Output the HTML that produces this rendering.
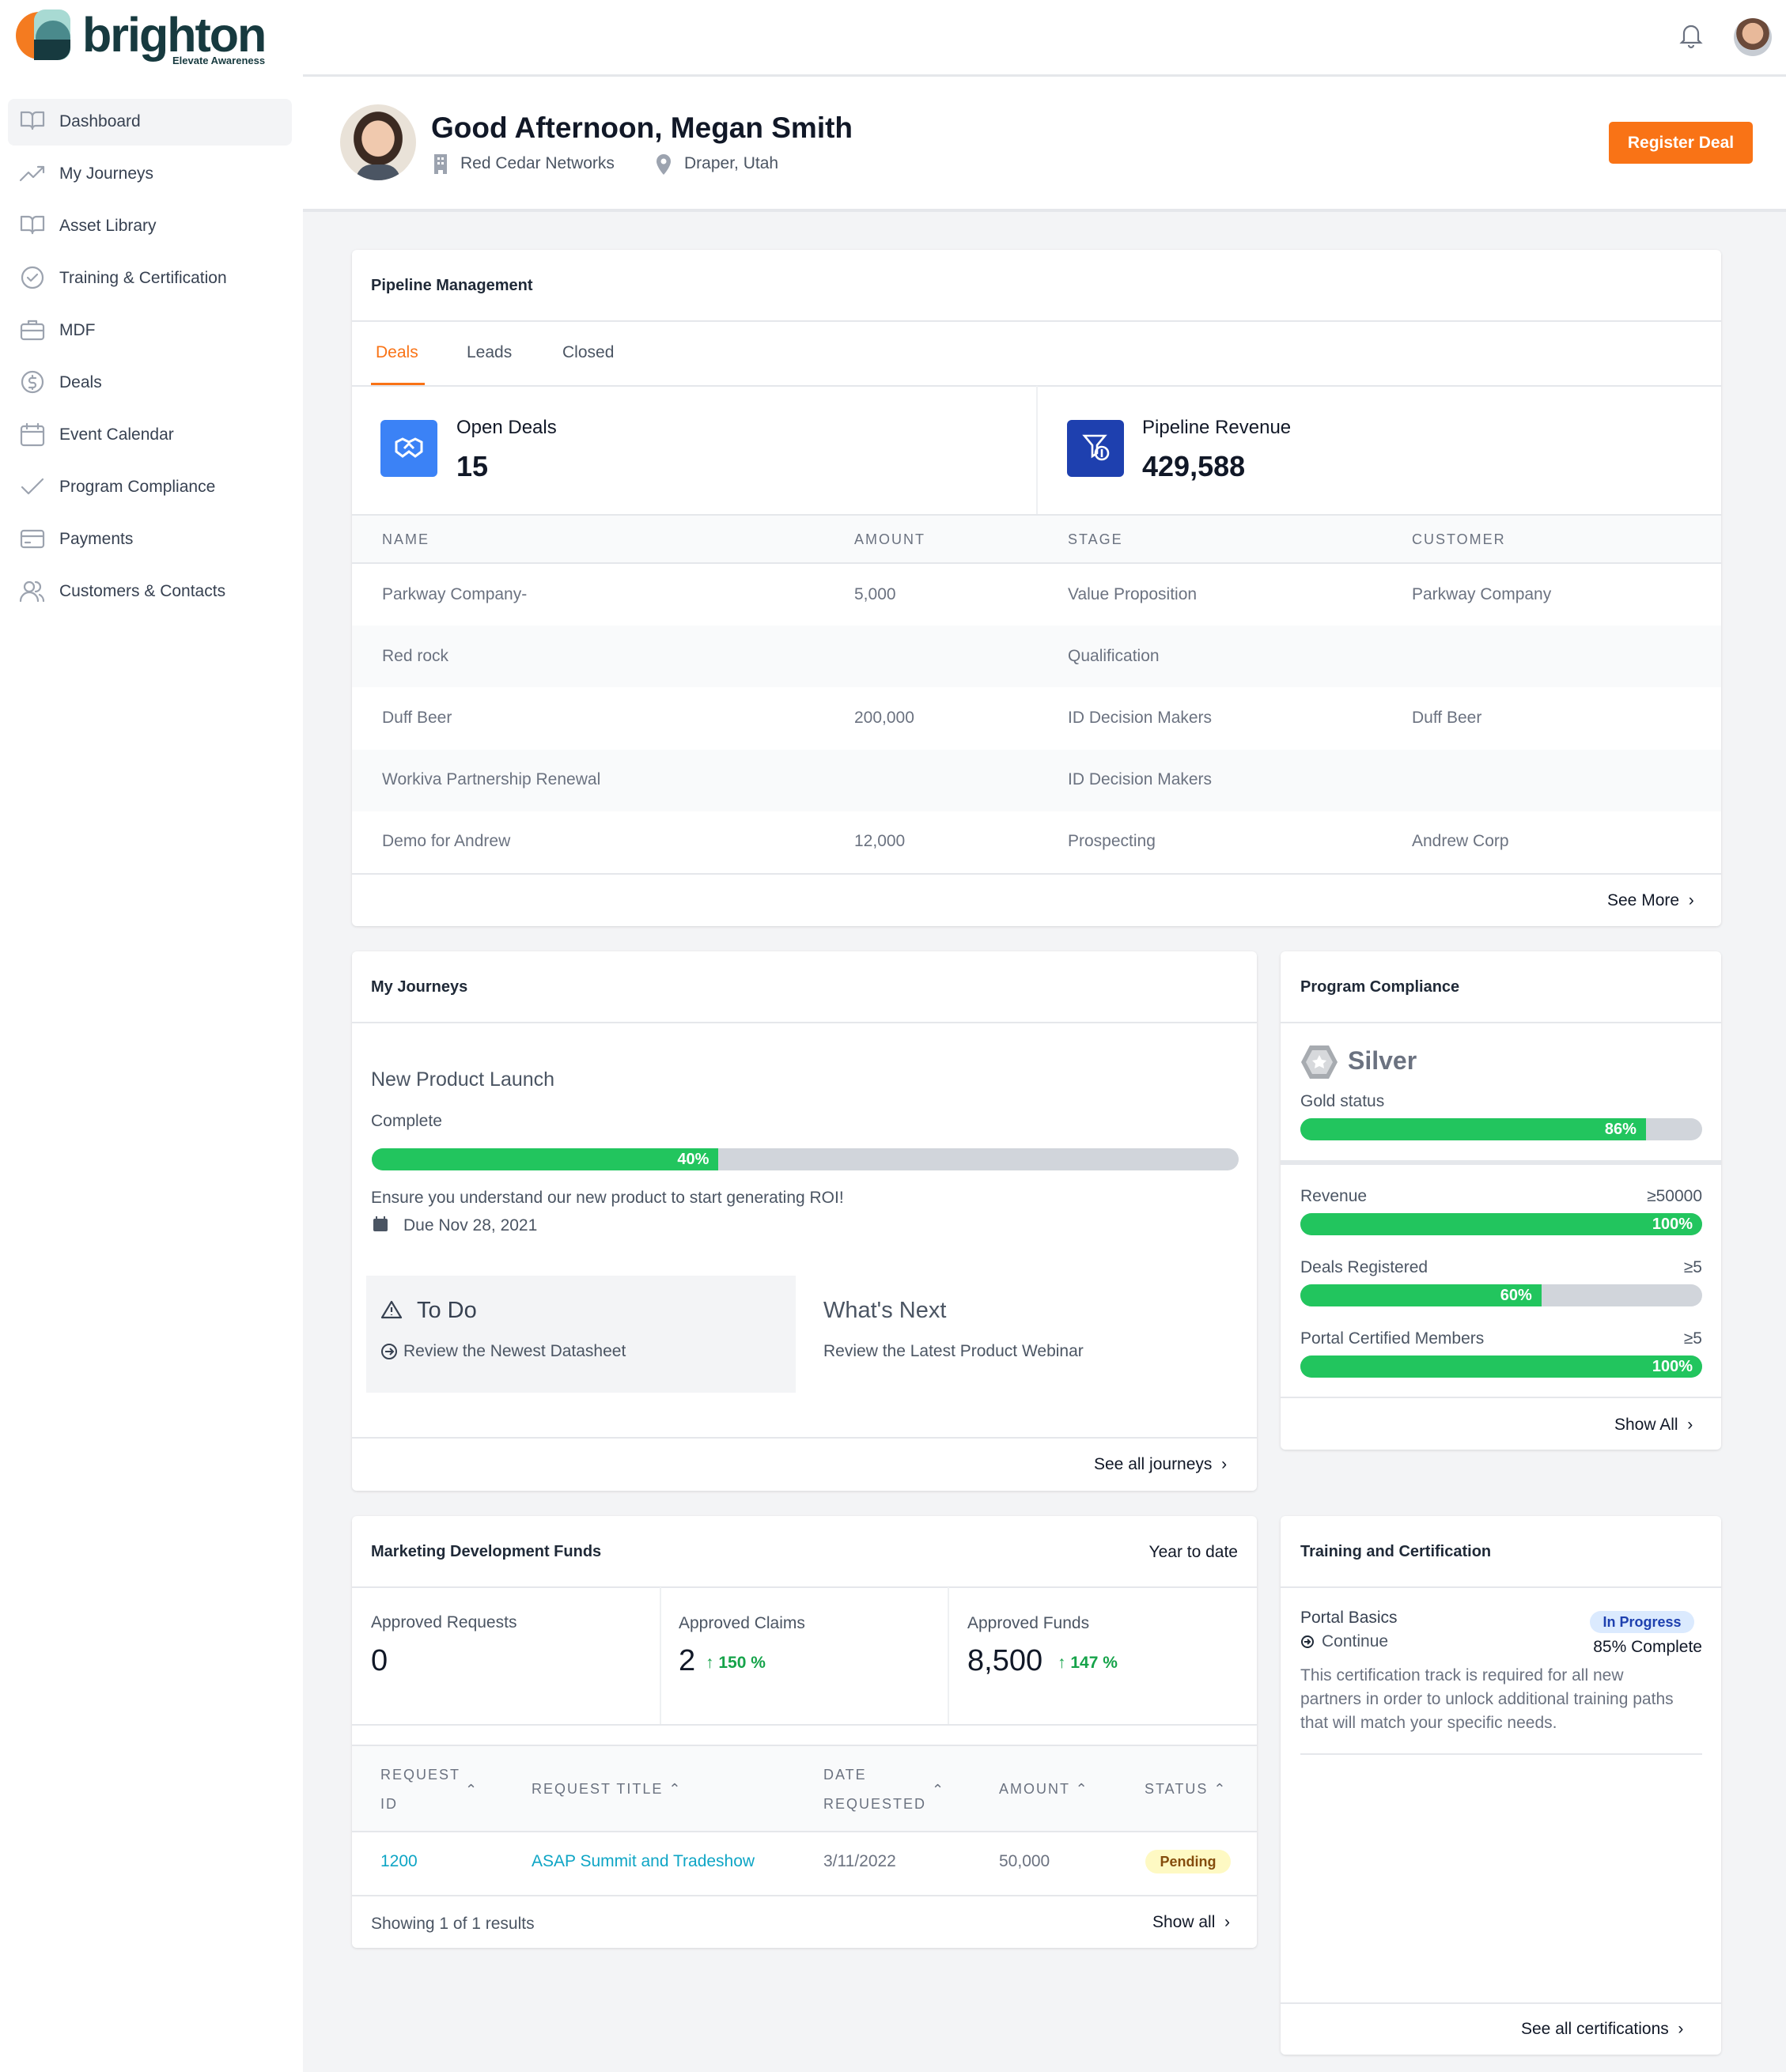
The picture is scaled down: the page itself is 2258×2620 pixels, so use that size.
<!DOCTYPE html>
<html><head><meta charset="utf-8"><style>
*{box-sizing:border-box;margin:0;padding:0}
body{width:2258px;height:2620px;position:relative;overflow:hidden;background:#f3f4f6;font-family:"Liberation Sans",sans-serif;color:#374151}
.a{position:absolute}
.t{position:absolute;white-space:nowrap;line-height:1}
.card{position:absolute;background:#fff;border-radius:6px;box-shadow:0 1px 3px rgba(0,0,0,.12)}
.hl{position:absolute;left:0;right:0;height:2px;background:#e5e7eb}
.bar{position:absolute;height:28px;border-radius:14px;background:#d1d5db;overflow:hidden}
.bar i{position:absolute;left:0;top:0;bottom:0;background:#22c55e;color:#fff;font-style:normal;font-weight:bold;font-size:20px;text-align:right;padding-right:12px;line-height:28px}
.th{font-size:18px;letter-spacing:2px;color:#6b7280}
.td{font-size:21px;color:#6b7280}
</style></head><body>
<div class="a" style="left:0;top:0;width:383px;height:2620px;background:#fff"></div>
<div class="a" style="left:383px;top:0;width:1875px;height:266px;background:#fff"></div>
<div class="a" style="left:383px;top:94px;width:1875px;height:3px;background:#e5e7eb"></div>
<div class="a" style="left:383px;top:264px;width:1875px;height:4px;background:#e5e7eb"></div>
<svg class="a" style="left:20px;top:10px" width="72" height="68" viewBox="0 0 72 68"><path d="M30 5 A30 30 0 0 0 30 65Z" fill="#f47b20"/><rect x="23" y="2" width="46" height="64" rx="14" fill="#a8dad3"/><circle cx="47" cy="38" r="22" fill="#4a8a8c"/><path d="M23 40h46v10a16 16 0 0 1-16 16H23z" fill="#173a3f"/></svg>
<div class="t" style="left:104px;top:14px;font-size:61px;font-weight:bold;color:#173a3f;letter-spacing:-2px">brighton</div>
<div class="t" style="left:218px;top:70px;font-size:13px;color:#173a3f;font-weight:bold">Elevate Awareness</div>
<div class="a" style="left:10px;top:125px;width:359px;height:59px;background:#f3f4f6;border-radius:8px"></div>
<div class="t" style="left:75px;top:143px;font-size:21px;color:#374151">Dashboard</div>
<div class="t" style="left:75px;top:209px;font-size:21px">My Journeys</div>
<div class="t" style="left:75px;top:275px;font-size:21px">Asset Library</div>
<div class="t" style="left:75px;top:341px;font-size:21px">Training &amp; Certification</div>
<div class="t" style="left:75px;top:407px;font-size:21px">MDF</div>
<div class="t" style="left:75px;top:473px;font-size:21px">Deals</div>
<div class="t" style="left:75px;top:539px;font-size:21px">Event Calendar</div>
<div class="t" style="left:75px;top:605px;font-size:21px">Program Compliance</div>
<div class="t" style="left:75px;top:671px;font-size:21px">Payments</div>
<div class="t" style="left:75px;top:737px;font-size:21px">Customers &amp; Contacts</div>
<svg class="a" style="left:24px;top:138px" width="34" height="640" fill="none" stroke="#9ca3af" stroke-width="2.2" stroke-linecap="round" stroke-linejoin="round">
<path d="M3 4h9a5 5 0 0 1 5 5v16a4 4 0 0 0-4-4H3zM31 4h-9a5 5 0 0 0-5 5v16a4 4 0 0 1 4-4h10z"/>
<g transform="translate(0,66)"><path d="M2 24l10-10 6 6 13-13M24 7h7v7"/></g>
<g transform="translate(0,132)"><path d="M3 4h9a5 5 0 0 1 5 5v16a4 4 0 0 0-4-4H3zM31 4h-9a5 5 0 0 0-5 5v16a4 4 0 0 1 4-4h10z"/></g>
<g transform="translate(0,198)"><circle cx="17" cy="15" r="13"/><path d="M11 15l4 4 8-8"/></g>
<g transform="translate(0,264)"><rect x="3" y="8" width="28" height="19" rx="3"/><path d="M12 8V4h10v4M3 16h28"/></g>
<g transform="translate(0,330)"><circle cx="17" cy="15" r="13"/><path d="M21 10h-5a3 3 0 0 0 0 6h2a3 3 0 0 1 0 6h-5M17 7v3M17 22v2"/></g>
<g transform="translate(0,396)"><rect x="3" y="5" width="28" height="24" rx="3"/><path d="M3 12h28M10 2v6M24 2v6"/></g>
<g transform="translate(0,462)"><path d="M4 16l8 8L30 6"/></g>
<g transform="translate(0,528)"><rect x="3" y="5" width="28" height="21" rx="3"/><path d="M3 12h28M8 20h6"/></g>
<g transform="translate(0,594)"><circle cx="13" cy="10" r="6"/><path d="M2 28a11 11 0 0 1 22 0M21 4a6 6 0 0 1 0 12M26 20a9 9 0 0 1 5 8"/></g>
</svg>
<svg class="a" style="left:2123px;top:28px" width="30" height="34" fill="none" stroke="#6b7280" stroke-width="2.2"><path d="M6 23V14a9 9 0 0 1 18 0v9l3 3H3zM12 29a3 3 0 0 0 6 0"/></svg>
<div class="a" style="left:2192px;top:23px;width:48px;height:48px;border-radius:50%;background:radial-gradient(circle at 50% 40%,#e8b99a 0 35%,#6b4a3a 36% 55%,#c7ccd3 56%)"></div>
<div class="a" style="left:430px;top:132px;width:96px;height:96px;border-radius:50%;background:radial-gradient(ellipse at 50% 45%,#f0c9ae 0 30%,#3b2a22 31% 45%,#e9e2d8 46%);overflow:hidden"><div class="a" style="left:20px;top:76px;width:56px;height:30px;background:#4b5563;border-radius:20px 20px 0 0"></div></div>
<div class="t" style="left:545px;top:143px;font-size:37px;font-weight:bold;color:#111827">Good Afternoon, Megan Smith</div>
<svg class="a" style="left:548px;top:194px" width="18" height="26" fill="#9ca3af"><path d="M1 1h16v25h-5v-5H6v5H1z"/><rect x="5" y="5" width="3" height="3" fill="#fff"/><rect x="10" y="5" width="3" height="3" fill="#fff"/><rect x="5" y="11" width="3" height="3" fill="#fff"/><rect x="10" y="11" width="3" height="3" fill="#fff"/></svg>
<div class="t" style="left:582px;top:196px;font-size:21px;color:#4b5563">Red Cedar Networks</div>
<svg class="a" style="left:828px;top:194px" width="22" height="28"><path d="M11 1a9 9 0 0 1 9 9c0 7-9 17-9 17S2 17 2 10a9 9 0 0 1 9-9z" fill="#9ca3af"/><circle cx="11" cy="10" r="3.5" fill="#fff"/></svg>
<div class="t" style="left:865px;top:196px;font-size:21px;color:#4b5563">Draper, Utah</div>
<div class="a" style="left:2034px;top:154px;width:182px;height:53px;background:#f97316;border-radius:5px;color:#fff;font-size:21px;font-weight:bold;text-align:center;line-height:53px">Register Deal</div>

<div class="card" style="left:445px;top:316px;width:1731px;height:855px">
<div class="t" style="left:24px;top:35px;font-size:20px;font-weight:bold;color:#1f2937">Pipeline Management</div>
<div class="hl" style="top:89px"></div>
<div class="t" style="left:30px;top:119px;font-size:21px;color:#f97316">Deals</div>
<div class="a" style="left:24px;top:168px;width:68px;height:4px;background:#f97316"></div>
<div class="t" style="left:145px;top:119px;font-size:21px;color:#4b5563">Leads</div>
<div class="t" style="left:266px;top:119px;font-size:21px;color:#4b5563">Closed</div>
<div class="hl" style="top:171px"></div>
<div class="a" style="left:865px;top:172px;width:2px;height:162px;background:#eef0f2"></div>
<div class="a" style="left:36px;top:215px;width:72px;height:72px;border-radius:6px;background:#3b82f6"></div>
<svg class="a" style="left:52px;top:233px" width="40" height="36" fill="none" stroke="#fff" stroke-width="3"><path d="M4 10l8-4 8 4 8-4 8 4v12l-8 6-8-6-8 6-8-6z"/><path d="M14 18l6-6 6 6"/></svg>
<div class="t" style="left:132px;top:213px;font-size:24px;color:#111827">Open Deals</div>
<div class="t" style="left:132px;top:256px;font-size:36px;font-weight:bold;color:#111827">15</div>
<div class="a" style="left:904px;top:215px;width:72px;height:72px;border-radius:6px;background:#1e40af"></div>
<svg class="a" style="left:922px;top:231px" width="40" height="40" fill="none" stroke="#fff" stroke-width="2.6"><path d="M4 4h26l-10 12v10l-6 4V16z"/><circle cx="26" cy="26" r="8"/><path d="M26 21v10"/></svg>
<div class="t" style="left:999px;top:213px;font-size:24px;color:#111827">Pipeline Revenue</div>
<div class="t" style="left:999px;top:256px;font-size:36px;font-weight:bold;color:#111827">429,588</div>
<div class="a" style="left:0;top:334px;width:1731px;height:63px;background:#f9fafb;border-top:2px solid #e5e7eb;border-bottom:2px solid #e5e7eb"></div>
<div class="t th" style="left:38px;top:357px">NAME</div>
<div class="t th" style="left:635px;top:357px">AMOUNT</div>
<div class="t th" style="left:905px;top:357px">STAGE</div>
<div class="t th" style="left:1340px;top:357px">CUSTOMER</div>
<div class="a" style="left:0;top:475px;width:1731px;height:78px;background:#f9fafb"></div>
<div class="a" style="left:0;top:632px;width:1731px;height:78px;background:#f9fafb"></div>
<div class="t td" style="left:38px;top:425px">Parkway Company-</div><div class="t td" style="left:635px;top:425px">5,000</div><div class="t td" style="left:905px;top:425px">Value Proposition</div><div class="t td" style="left:1340px;top:425px">Parkway Company</div>
<div class="t td" style="left:38px;top:503px">Red rock</div><div class="t td" style="left:905px;top:503px">Qualification</div>
<div class="t td" style="left:38px;top:581px">Duff Beer</div><div class="t td" style="left:635px;top:581px">200,000</div><div class="t td" style="left:905px;top:581px">ID Decision Makers</div><div class="t td" style="left:1340px;top:581px">Duff Beer</div>
<div class="t td" style="left:38px;top:659px">Workiva Partnership Renewal</div><div class="t td" style="left:905px;top:659px">ID Decision Makers</div>
<div class="t td" style="left:38px;top:737px">Demo for Andrew</div><div class="t td" style="left:635px;top:737px">12,000</div><div class="t td" style="left:905px;top:737px">Prospecting</div><div class="t td" style="left:1340px;top:737px">Andrew Corp</div>
<div class="hl" style="top:788px"></div>
<div class="t" style="left:1587px;top:812px;font-size:21px;color:#111827">See More &nbsp;›</div>
</div>

<div class="card" style="left:445px;top:1203px;width:1144px;height:682px">
<div class="t" style="left:24px;top:35px;font-size:20px;font-weight:bold;color:#1f2937">My Journeys</div>
<div class="hl" style="top:89px"></div>
<div class="t" style="left:24px;top:150px;font-size:25px;color:#4b5563">New Product Launch</div>
<div class="t" style="left:24px;top:204px;font-size:21px;color:#4b5563">Complete</div>
<div class="bar" style="left:25px;top:249px;width:1096px"><i style="width:40%">40%</i></div>
<div class="t" style="left:24px;top:301px;font-size:21px;color:#4b5563">Ensure you understand our new product to start generating ROI!</div>
<svg class="a" style="left:26px;top:335px" width="20" height="20" fill="#4b5563"><rect x="1" y="3" width="18" height="16" rx="2"/><rect x="4" y="0" width="2" height="5"/><rect x="14" y="0" width="2" height="5"/></svg>
<div class="t" style="left:65px;top:336px;font-size:21px;color:#4b5563">Due Nov 28, 2021</div>
<div class="a" style="left:18px;top:410px;width:543px;height:148px;background:#f3f4f6"></div>
<svg class="a" style="left:36px;top:440px" width="28" height="26" fill="none" stroke="#374151" stroke-width="2.2" stroke-linejoin="round"><path d="M14 3L26 23H2z"/><path d="M14 10v6M14 19v1"/></svg>
<div class="t" style="left:82px;top:440px;font-size:29px;color:#374151">To Do</div>
<svg class="a" style="left:36px;top:495px" width="22" height="22" fill="none" stroke="#374151" stroke-width="2"><circle cx="11" cy="11" r="9"/><path d="M6 11h9M12 7l4 4-4 4"/></svg>
<div class="t" style="left:65px;top:495px;font-size:21px;color:#4b5563">Review the Newest Datasheet</div>
<div class="t" style="left:596px;top:440px;font-size:29px;color:#4b5563">What's Next</div>
<div class="t" style="left:596px;top:495px;font-size:21px;color:#4b5563">Review the Latest Product Webinar</div>
<div class="hl" style="top:614px"></div>
<div class="t" style="left:938px;top:638px;font-size:21px;color:#111827">See all journeys &nbsp;›</div>
</div>

<div class="card" style="left:1619px;top:1203px;width:557px;height:630px">
<div class="t" style="left:25px;top:35px;font-size:20px;font-weight:bold;color:#1f2937">Program Compliance</div>
<div class="hl" style="top:89px"></div>
<svg class="a" style="left:25px;top:117px" width="48" height="46"><path d="M12 2h24l11 21-11 21H12L1 23z" fill="#a7abb0"/><path d="M15 8h18l8 15-8 15H15L7 23z" fill="#d7d9dc"/><path d="M24 14l3 6 6 1-4 4 1 6-6-3-6 3 1-6-4-4 6-1z" fill="#fff"/></svg>
<div class="t" style="left:85px;top:122px;font-size:32px;font-weight:bold;color:#6b7280">Silver</div>
<div class="t" style="left:25px;top:179px;font-size:21px;color:#4b5563">Gold status</div>
<div class="bar" style="left:25px;top:211px;width:508px"><i style="width:86%">86%</i></div>
<div class="a" style="left:0;top:264px;width:557px;height:6px;background:#e5e7eb"></div>
<div class="t" style="left:25px;top:299px;font-size:21px;color:#4b5563">Revenue</div><div class="t" style="right:24px;top:299px;font-size:21px;color:#4b5563">≥50000</div>
<div class="bar" style="left:25px;top:331px;width:508px"><i style="width:100%">100%</i></div>
<div class="t" style="left:25px;top:389px;font-size:21px;color:#4b5563">Deals Registered</div><div class="t" style="right:24px;top:389px;font-size:21px;color:#4b5563">≥5</div>
<div class="bar" style="left:25px;top:421px;width:508px"><i style="width:60%">60%</i></div>
<div class="t" style="left:25px;top:479px;font-size:21px;color:#4b5563">Portal Certified Members</div><div class="t" style="right:24px;top:479px;font-size:21px;color:#4b5563">≥5</div>
<div class="bar" style="left:25px;top:511px;width:508px"><i style="width:100%">100%</i></div>
<div class="hl" style="top:563px"></div>
<div class="t" style="left:422px;top:588px;font-size:21px;color:#111827">Show All &nbsp;›</div>
</div>

<div class="card" style="left:445px;top:1917px;width:1144px;height:546px">
<div class="t" style="left:24px;top:35px;font-size:20px;font-weight:bold;color:#1f2937">Marketing Development Funds</div>
<div class="t" style="right:24px;top:35px;font-size:21px;color:#111827">Year to date</div>
<div class="hl" style="top:89px"></div>
<div class="a" style="left:389px;top:90px;width:2px;height:174px;background:#eef0f2"></div>
<div class="a" style="left:753px;top:90px;width:2px;height:174px;background:#eef0f2"></div>
<div class="hl" style="top:263px"></div>
<div class="t" style="left:24px;top:124px;font-size:21px;color:#4b5563">Approved Requests</div>
<div class="t" style="left:24px;top:164px;font-size:38px;color:#111827">0</div>
<div class="t" style="left:413px;top:125px;font-size:21px;color:#4b5563">Approved Claims</div>
<div class="t" style="left:413px;top:164px;font-size:38px;color:#111827">2</div>
<div class="t" style="left:447px;top:175px;font-size:21px;color:#16a34a;font-weight:bold">↑ 150 %</div>
<div class="t" style="left:778px;top:125px;font-size:21px;color:#4b5563">Approved Funds</div>
<div class="t" style="left:778px;top:164px;font-size:38px;color:#111827">8,500</div>
<div class="t" style="left:892px;top:175px;font-size:21px;color:#16a34a;font-weight:bold">↑ 147 %</div>
<div class="a" style="left:0;top:289px;width:1144px;height:111px;background:#f9fafb;border-top:2px solid #e5e7eb;border-bottom:2px solid #e5e7eb"></div>
<div class="t th" style="left:36px;top:318px">REQUEST</div><div class="t th" style="left:36px;top:355px">ID</div><div class="t th" style="left:143px;top:337px;letter-spacing:0">⌃</div>
<div class="t th" style="left:227px;top:336px">REQUEST TITLE ⌃</div>
<div class="t th" style="left:596px;top:318px">DATE</div><div class="t th" style="left:596px;top:355px">REQUESTED</div><div class="t th" style="left:733px;top:337px">⌃</div>
<div class="t th" style="left:818px;top:336px">AMOUNT ⌃</div>
<div class="t th" style="left:1002px;top:336px">STATUS ⌃</div>
<div class="t" style="left:36px;top:426px;font-size:21px;color:#0ea5c5">1200</div>
<div class="t" style="left:227px;top:426px;font-size:21px;color:#0ea5c5">ASAP Summit and Tradeshow</div>
<div class="t td" style="left:596px;top:426px">3/11/2022</div>
<div class="t td" style="left:818px;top:426px">50,000</div>
<div class="a" style="left:1003px;top:422px;width:108px;height:30px;border-radius:15px;background:#fef9c3;color:#854d0e;font-size:18px;font-weight:bold;text-align:center;line-height:30px">Pending</div>
<div class="hl" style="top:479px"></div>
<div class="t" style="left:24px;top:505px;font-size:21px;color:#4b5563">Showing 1 of 1 results</div>
<div class="t" style="left:1012px;top:503px;font-size:21px;color:#111827">Show all &nbsp;›</div>
</div>

<div class="card" style="left:1619px;top:1917px;width:557px;height:681px">
<div class="t" style="left:25px;top:35px;font-size:20px;font-weight:bold;color:#1f2937">Training and Certification</div>
<div class="hl" style="top:89px"></div>
<div class="t" style="left:25px;top:118px;font-size:21px;color:#374151">Portal Basics</div>
<svg class="a" style="left:25px;top:150px" width="18" height="18" fill="none" stroke="#1f2937" stroke-width="2"><circle cx="9" cy="9" r="7"/><path d="M5 9h7M9 6l3 3-3 3"/></svg>
<div class="t" style="left:52px;top:148px;font-size:21px;color:#4b5563">Continue</div>
<div class="a" style="left:391px;top:120px;width:132px;height:28px;border-radius:14px;background:#dbeafe;color:#1e40af;font-size:18px;font-weight:bold;text-align:center;line-height:28px">In Progress</div>
<div class="t" style="right:24px;top:155px;font-size:21px;color:#111827">85% Complete</div>
<div class="a" style="left:25px;top:187px;width:520px;font-size:21px;line-height:30px;color:#6b7280;white-space:nowrap">This certification track is required for all new<br>partners in order to unlock additional training paths<br>that will match your specific needs.</div>
<div class="a" style="left:25px;top:300px;width:508px;height:2px;background:#e5e7eb"></div>
<div class="hl" style="top:615px"></div>
<div class="t" style="left:304px;top:638px;font-size:21px;color:#111827">See all certifications &nbsp;›</div>
</div>
</body></html>
